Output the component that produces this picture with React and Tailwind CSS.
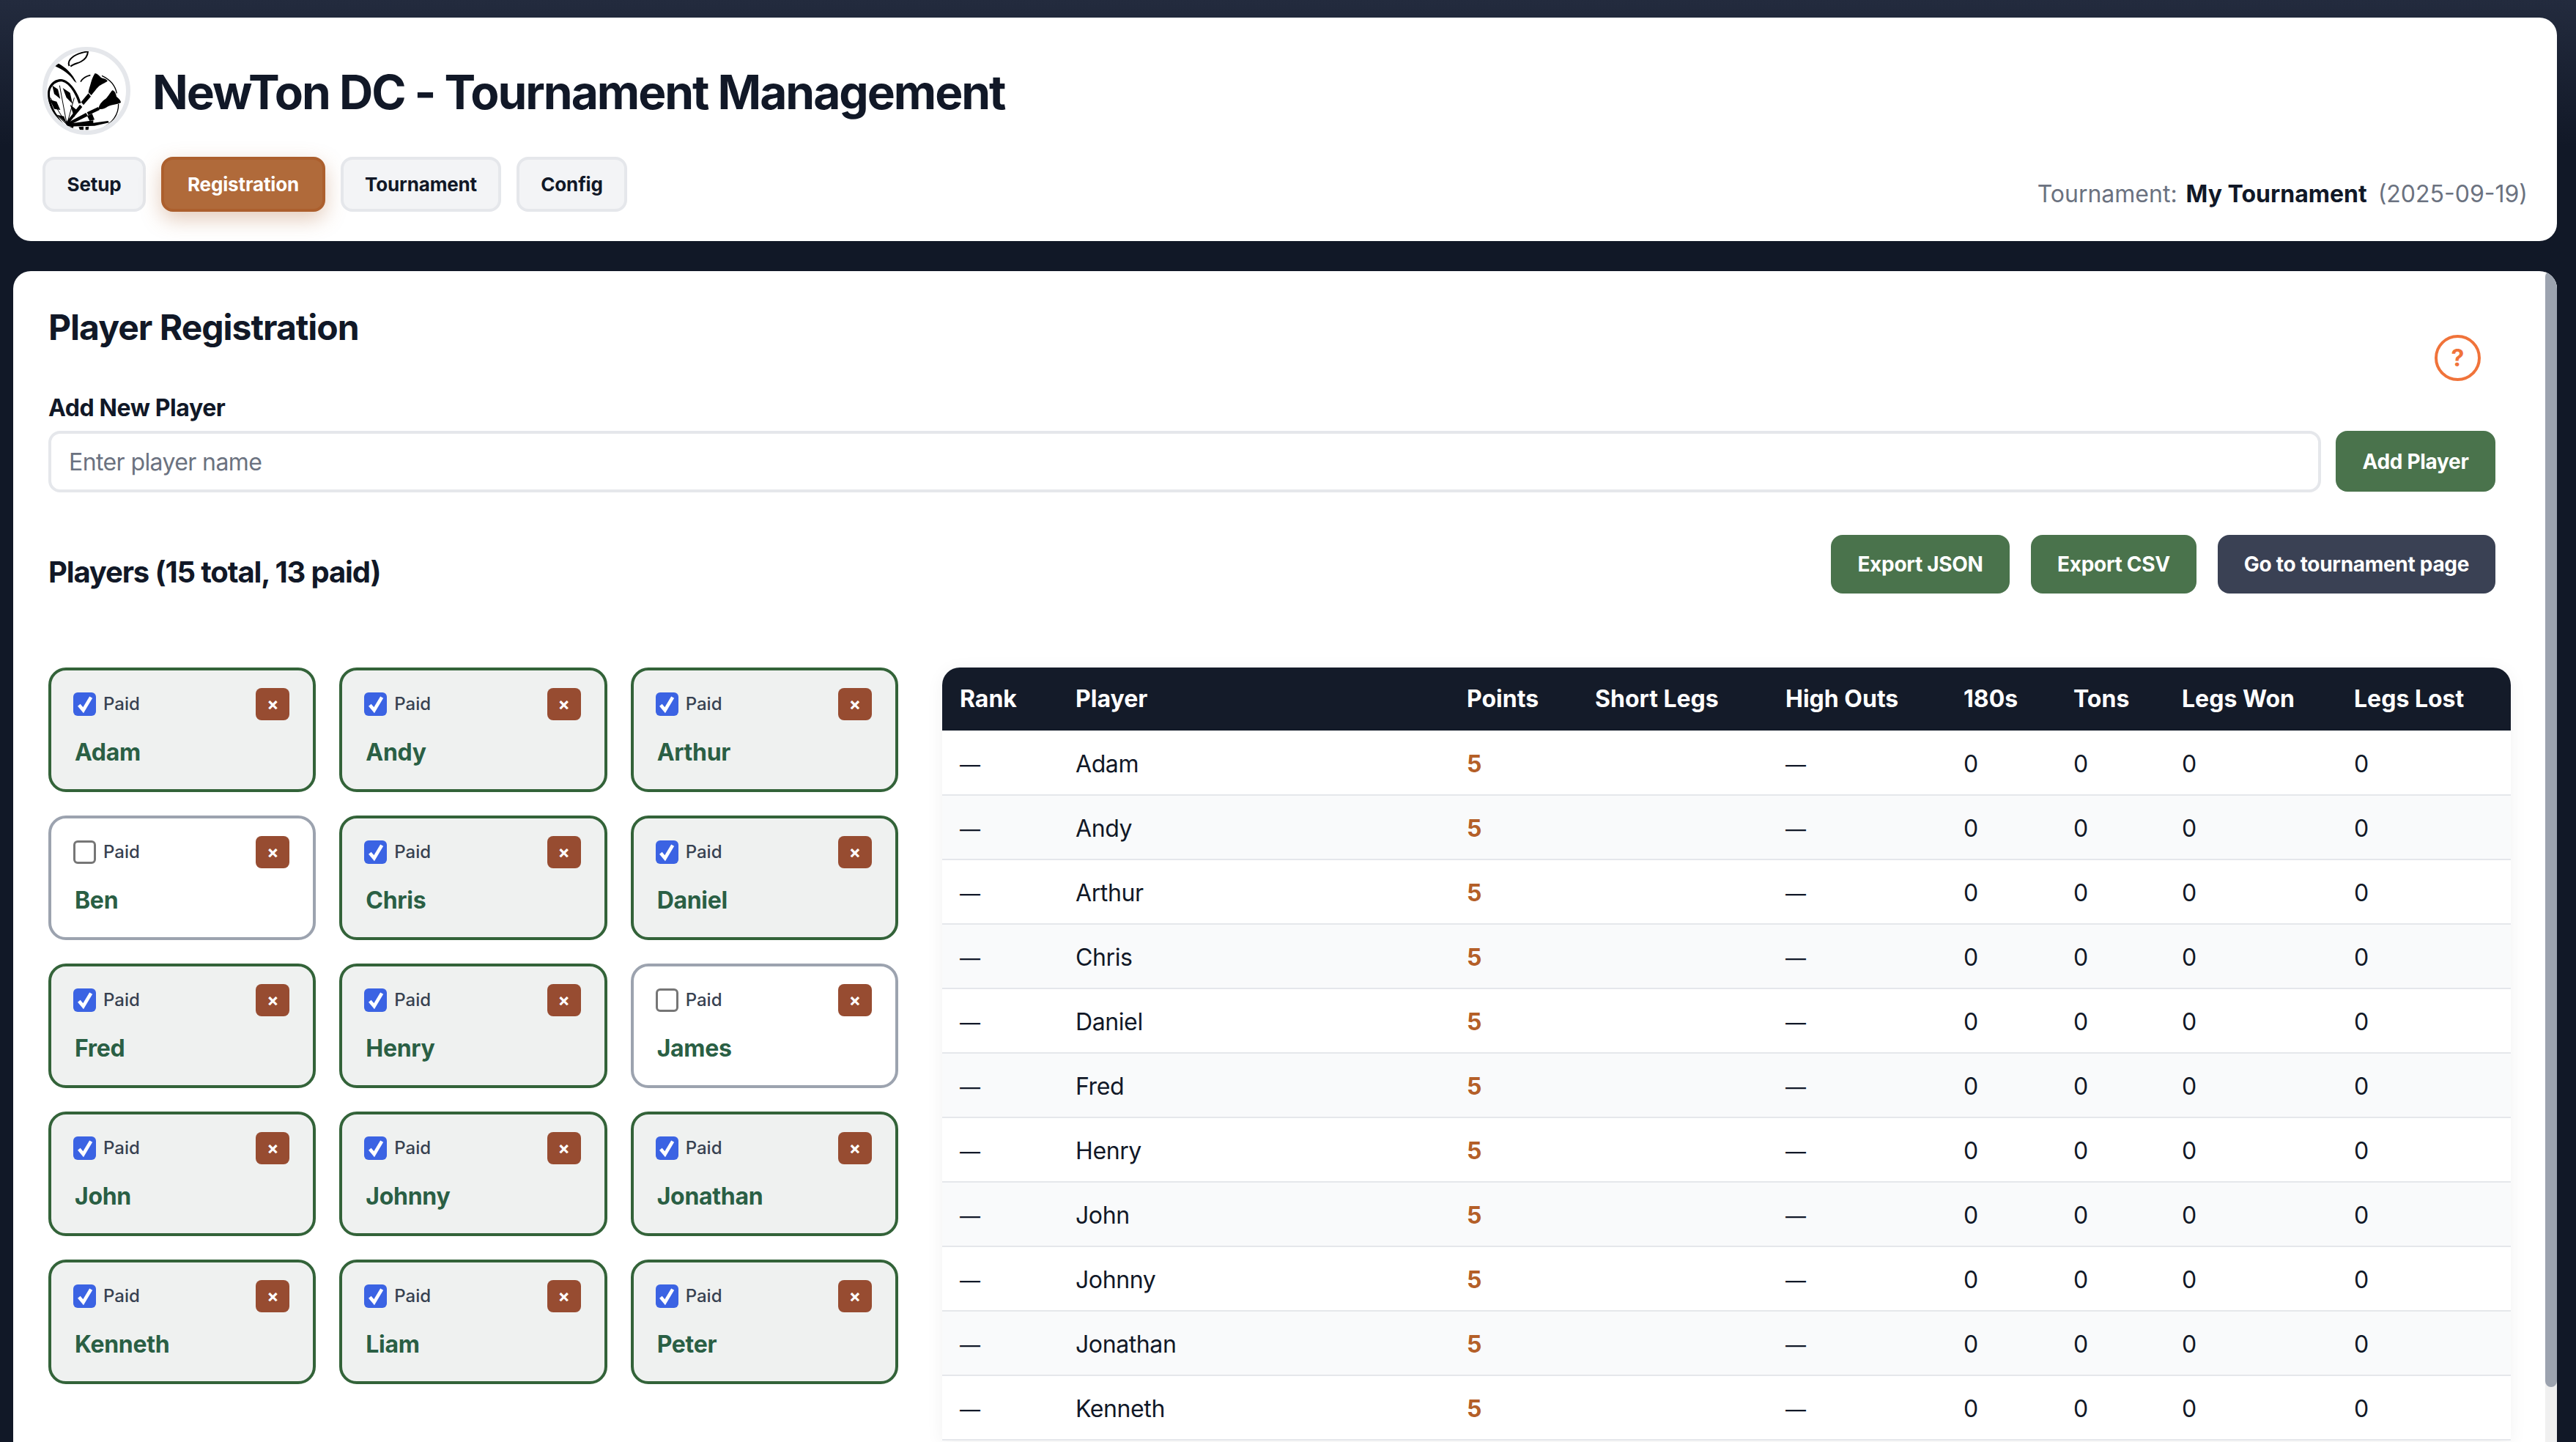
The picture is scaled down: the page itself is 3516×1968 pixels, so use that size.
const font = { fontFamily: 'Inter, sans-serif' };

const cardPlayers = [
    { name: 'Adam', paid: true },
    { name: 'Andy', paid: true },
    { name: 'Arthur', paid: true },
    { name: 'Ben', paid: false },
    { name: 'Chris', paid: true },
    { name: 'Daniel', paid: true },
    { name: 'Fred', paid: true },
    { name: 'Henry', paid: true },
    { name: 'James', paid: false },
    { name: 'John', paid: true },
    { name: 'Johnny', paid: true },
    { name: 'Jonathan', paid: true },
    { name: 'Kenneth', paid: true },
    { name: 'Liam', paid: true },
    { name: 'Peter', paid: true },
];

const tableRows = ['Adam', 'Andy', 'Arthur', 'Chris', 'Daniel', 'Fred', 'Henry', 'John', 'Johnny', 'Jonathan', 'Kenneth'];

const columns = [
    ['Rank', 'w-[158px]'],
    ['Player', 'w-[534px]'],
    ['Points', 'w-[175px]'],
    ['Short Legs', 'w-[260px]'],
    ['High Outs', 'w-[243px]'],
    ['180s', 'w-[150px]'],
    ['Tons', 'w-[148px]'],
    ['Legs Won', 'w-[235px]'],
    ['Legs Lost', 'w-[238px]'],
];

const Logo = () => (
    <div className="h-[120px] w-[120px] shrink-0 overflow-hidden rounded-full border-[6px] border-[#e5e7eb] bg-white">
        <svg viewBox="0 0 324 324" className="h-full w-full">
            {/* leaf */}
            <path d="M92 60C82 42 100 22 130 10C145 5 158 2 168 1C167 15 158 32 140 42C125 50 108 52 97 62" fill="none" stroke="#000" strokeWidth="6" />
            {/* stem */}
            <path d="M32 60L48 50C75 65 105 90 122 130L112 122C95 95 65 75 32 60Z" />
            {/* apple outline */}
            <path d="M138 125C146 110 160 102 178 98" fill="none" stroke="#000" strokeWidth="5" />
            <path d="M225 100C258 115 280 140 286 172" fill="none" stroke="#000" strokeWidth="4" />
            <path d="M293 215C294 255 275 290 222 318" fill="none" stroke="#000" strokeWidth="4" />
            {/* dart flights */}
            <path d="M197 90C208 92 214 100 222 108C232 112 246 114 248 122C238 130 222 134 210 146C200 156 192 168 182 180L170 168C172 155 176 145 180 130C184 115 190 100 197 90Z" />
            <path d="M268 160C278 162 282 172 285 185C292 192 303 200 303 210C290 218 270 216 250 226C238 234 225 240 212 236C212 220 225 205 240 195C250 188 258 170 268 160Z" />
            {/* dart shafts */}
            <path d="M170 172L180 185L150 220L140 208ZM135 218L145 228L85 300L78 292Z" />
            <path d="M210 228L216 240L170 262L164 250ZM160 252L168 265L85 305L78 296Z" />
            <path d="M80 298L190 283L190 293L250 285L255 292L195 305L80 308Z" />
            {/* dartboard */}
            <path d="M140 212C128 170 95 118 60 114C28 112 2 140 3 176C4 225 38 282 76 312L80 306C48 278 14 225 12 176C11 148 30 126 58 124C88 126 116 170 130 214Z" />
            <path d="M22 140L45 155L55 195L30 175ZM65 150L95 170L105 215L80 190ZM12 198L40 206L55 240L30 236ZM95 218L122 240L112 270ZM42 260L70 266L80 295ZM165 265L185 255L195 280L175 285Z" />
            <path d="M82 300L14 190M82 300L52 140M82 300L112 190M82 300L35 255" fill="none" stroke="#000" strokeWidth="3" />
            {/* bottom of the board */}
            <path d="M85 310L110 305L105 322L95 324ZM130 310L150 308L150 322L135 322ZM158 310L172 308L170 322L158 322Z" />
        </svg>
    </div>
);

const Tab = ({ label, active, className = '' }) => (
    <button
        className={`h-[75px] rounded-2xl border-4 text-[26px] font-bold tracking-[-0.15px] ${className} ${
            active
                ? 'border-[#ac5f2d] bg-[#b06a3a] text-white shadow-[0_10px_28px_rgba(176,106,58,0.35)]'
                : 'border-[#e5e7eb] bg-[#f3f4f6] text-[#111827]'
        }`}
    >
        {label}
    </button>
);

const Header = () => (
    <header className="flex h-[305px] shrink-0 flex-col rounded-3xl bg-white px-[40px] pt-[40px]">
        <div className="flex items-center gap-[30px]">
            <Logo />
            <h1 className="pt-[3px] text-[64px] font-bold tracking-[-2.03px] text-[#111827]">NewTon DC - Tournament Management</h1>
        </div>
        <div className="mt-[30px] flex items-start justify-between">
            <div className="flex gap-[21px]">
                <Tab label="Setup" className="w-[141px]" />
                <Tab label="Registration" active className="w-[224px]" />
                <Tab label="Tournament" className="w-[219px]" />
                <Tab label="Config" className="w-[151px]" />
            </div>
            <p className="mt-[27px] text-[32px] text-[#6b7280]">
                Tournament: <span className="ml-[3px] mr-[6px] font-bold text-[#111827]">My Tournament</span> (2025-09-19)
            </p>
        </div>
    </header>
);

const Check = ({ on }) =>
    on ? (
        <span className="flex h-[32px] w-[31px] items-center justify-center rounded-[6px] bg-[#3b63e3]">
            <svg viewBox="0 0 24 24" className="h-[28px] w-[28px]" fill="none" stroke="#fff" strokeWidth="4">
                <path d="M5 13l5 6L19 4" />
            </svg>
        </span>
    ) : (
        <span className="h-[32px] w-[31px] rounded-[6px] border-[3px] border-[#767676] bg-white" />
    );

const PlayerCard = ({ player }) => (
    <div
        className={`flex h-[170px] flex-col rounded-3xl border-4 pl-[30px] pr-[32px] pt-[24px] ${
            player.paid ? 'border-[#336339] bg-[#eff1f0]' : 'border-[#9ca3af] bg-white'
        }`}
    >
        <div className="flex items-center justify-between">
            <div className="flex items-center gap-[10px]">
                <Check on={player.paid} />
                <span className="text-[24px] font-medium text-[#374151]">Paid</span>
            </div>
            <button className="flex h-[44px] w-[46px] items-center justify-center rounded-lg bg-[#974c31] text-[24px] font-bold text-white">
                ×
            </button>
        </div>
        <p className="mt-[20px] pl-[2px] text-[32px] font-bold tracking-[-0.3px] text-[#2a5f44]">{player.name}</p>
    </div>
);

const Cell = ({ children, className = '' }) => (
    <td className={`px-[24px] pt-[4px] ${className}`}>{children}</td>
);

const Dash = () => <span className="text-[28px]">—</span>;

const StandingsTable = () => (
    <div className="ml-[1px] w-[2141px] shrink-0 overflow-hidden rounded-t-3xl shadow-[0_4px_24px_rgba(0,0,0,0.06)]">
        <table className="w-full table-fixed border-collapse text-[32px] text-[#111827]">
            <colgroup>
                {columns.map(([label, width]) => (
                    <col key={label} className={width} />
                ))}
            </colgroup>
            <thead>
                <tr className="h-[86px] bg-[#141b29] text-white">
                    {columns.map(([label]) => (
                        <th key={label} className="px-[24px] text-left font-bold">
                            {label}
                        </th>
                    ))}
                </tr>
            </thead>
            <tbody className="tracking-[-0.4px]">
                {tableRows.map((name) => (
                    <tr key={name} className="h-[88px] border-b-2 border-[#e5e7eb] even:bg-[#f9fafb]">
                        <Cell><Dash /></Cell>
                        <Cell>{name}</Cell>
                        <Cell className="font-bold text-[#b45f28]">5</Cell>
                        <Cell />
                        <Cell><Dash /></Cell>
                        <Cell>0</Cell>
                        <Cell>0</Cell>
                        <Cell>0</Cell>
                        <Cell>0</Cell>
                    </tr>
                ))}
            </tbody>
        </table>
    </div>
);

const ActionButton = ({ children, dark, className = '' }) => (
    <button
        className={`rounded-2xl text-[28px] font-bold tracking-[-0.3px] text-white ${dark ? 'bg-[#3a4154]' : 'bg-[#4a734c]'} ${className}`}
    >
        {children}
    </button>
);

export default function App() {
    return (
        <div
            style={font}
            className="flex h-screen flex-col gap-[41px] overflow-hidden bg-[linear-gradient(180deg,#232b3e_0px,#111827_200px)] px-[18px] pt-[24px] pr-[26px]"
        >
            <Header />
            <main className="flex min-h-0 flex-1 overflow-hidden rounded-t-3xl bg-white">
                <div className="min-w-0 flex-1 pl-[48px] pr-[68px] pt-[41px]">
                    <div className="flex items-start justify-between">
                        <h2 className="text-[48px] font-bold tracking-[-1px] text-[#111827]">Player Registration</h2>
                        <button className="mr-[20px] mt-[46px] flex h-[63px] w-[63px] items-center justify-center rounded-full border-4 border-[#f0733a] text-[32px] font-bold text-[#f0733a]">
                            ?
                        </button>
                    </div>
                    <label className="mt-[13px] block text-[32px] font-bold tracking-[-0.4px] text-[#111827]">Add New Player</label>
                    <div className="mt-[7px] flex gap-[20px]">
                        <input
                            placeholder="Enter player name"
                            className="h-[84px] flex-1 rounded-2xl border-4 border-[#e5e7eb] px-[24px] text-[32px] tracking-[-0.6px] placeholder:text-[#6b7280]"
                        />
                        <ActionButton className="h-[83px] w-[218px]">Add Player</ActionButton>
                    </div>
                    <div className="mt-[57px] flex items-center justify-between">
                        <h3 className="pt-[22px] text-[40px] font-bold tracking-[-1.15px] text-[#111827]">Players (15 total, 13 paid)</h3>
                        <div className="flex gap-[29px]">
                            <ActionButton className="h-[80px] w-[244px]">Export JSON</ActionButton>
                            <ActionButton className="h-[80px] w-[226px]">Export CSV</ActionButton>
                            <ActionButton dark className="h-[80px] w-[379px]">Go to tournament page</ActionButton>
                        </div>
                    </div>
                    <div className="mt-[100px] flex items-start gap-[59px]">
                        <div className="grid w-[1160px] shrink-0 grid-cols-3 gap-x-[32px] gap-y-[32px]">
                            {cardPlayers.map((player) => (
                                <PlayerCard key={player.name} player={player} />
                            ))}
                        </div>
                        <StandingsTable />
                    </div>
                </div>
                <div className="w-[16px] shrink-0 bg-[#f0f0f0]">
                    <div className="h-[1523px] rounded-full bg-[#9ca3af]" />
                </div>
            </main>
        </div>
    );
}
